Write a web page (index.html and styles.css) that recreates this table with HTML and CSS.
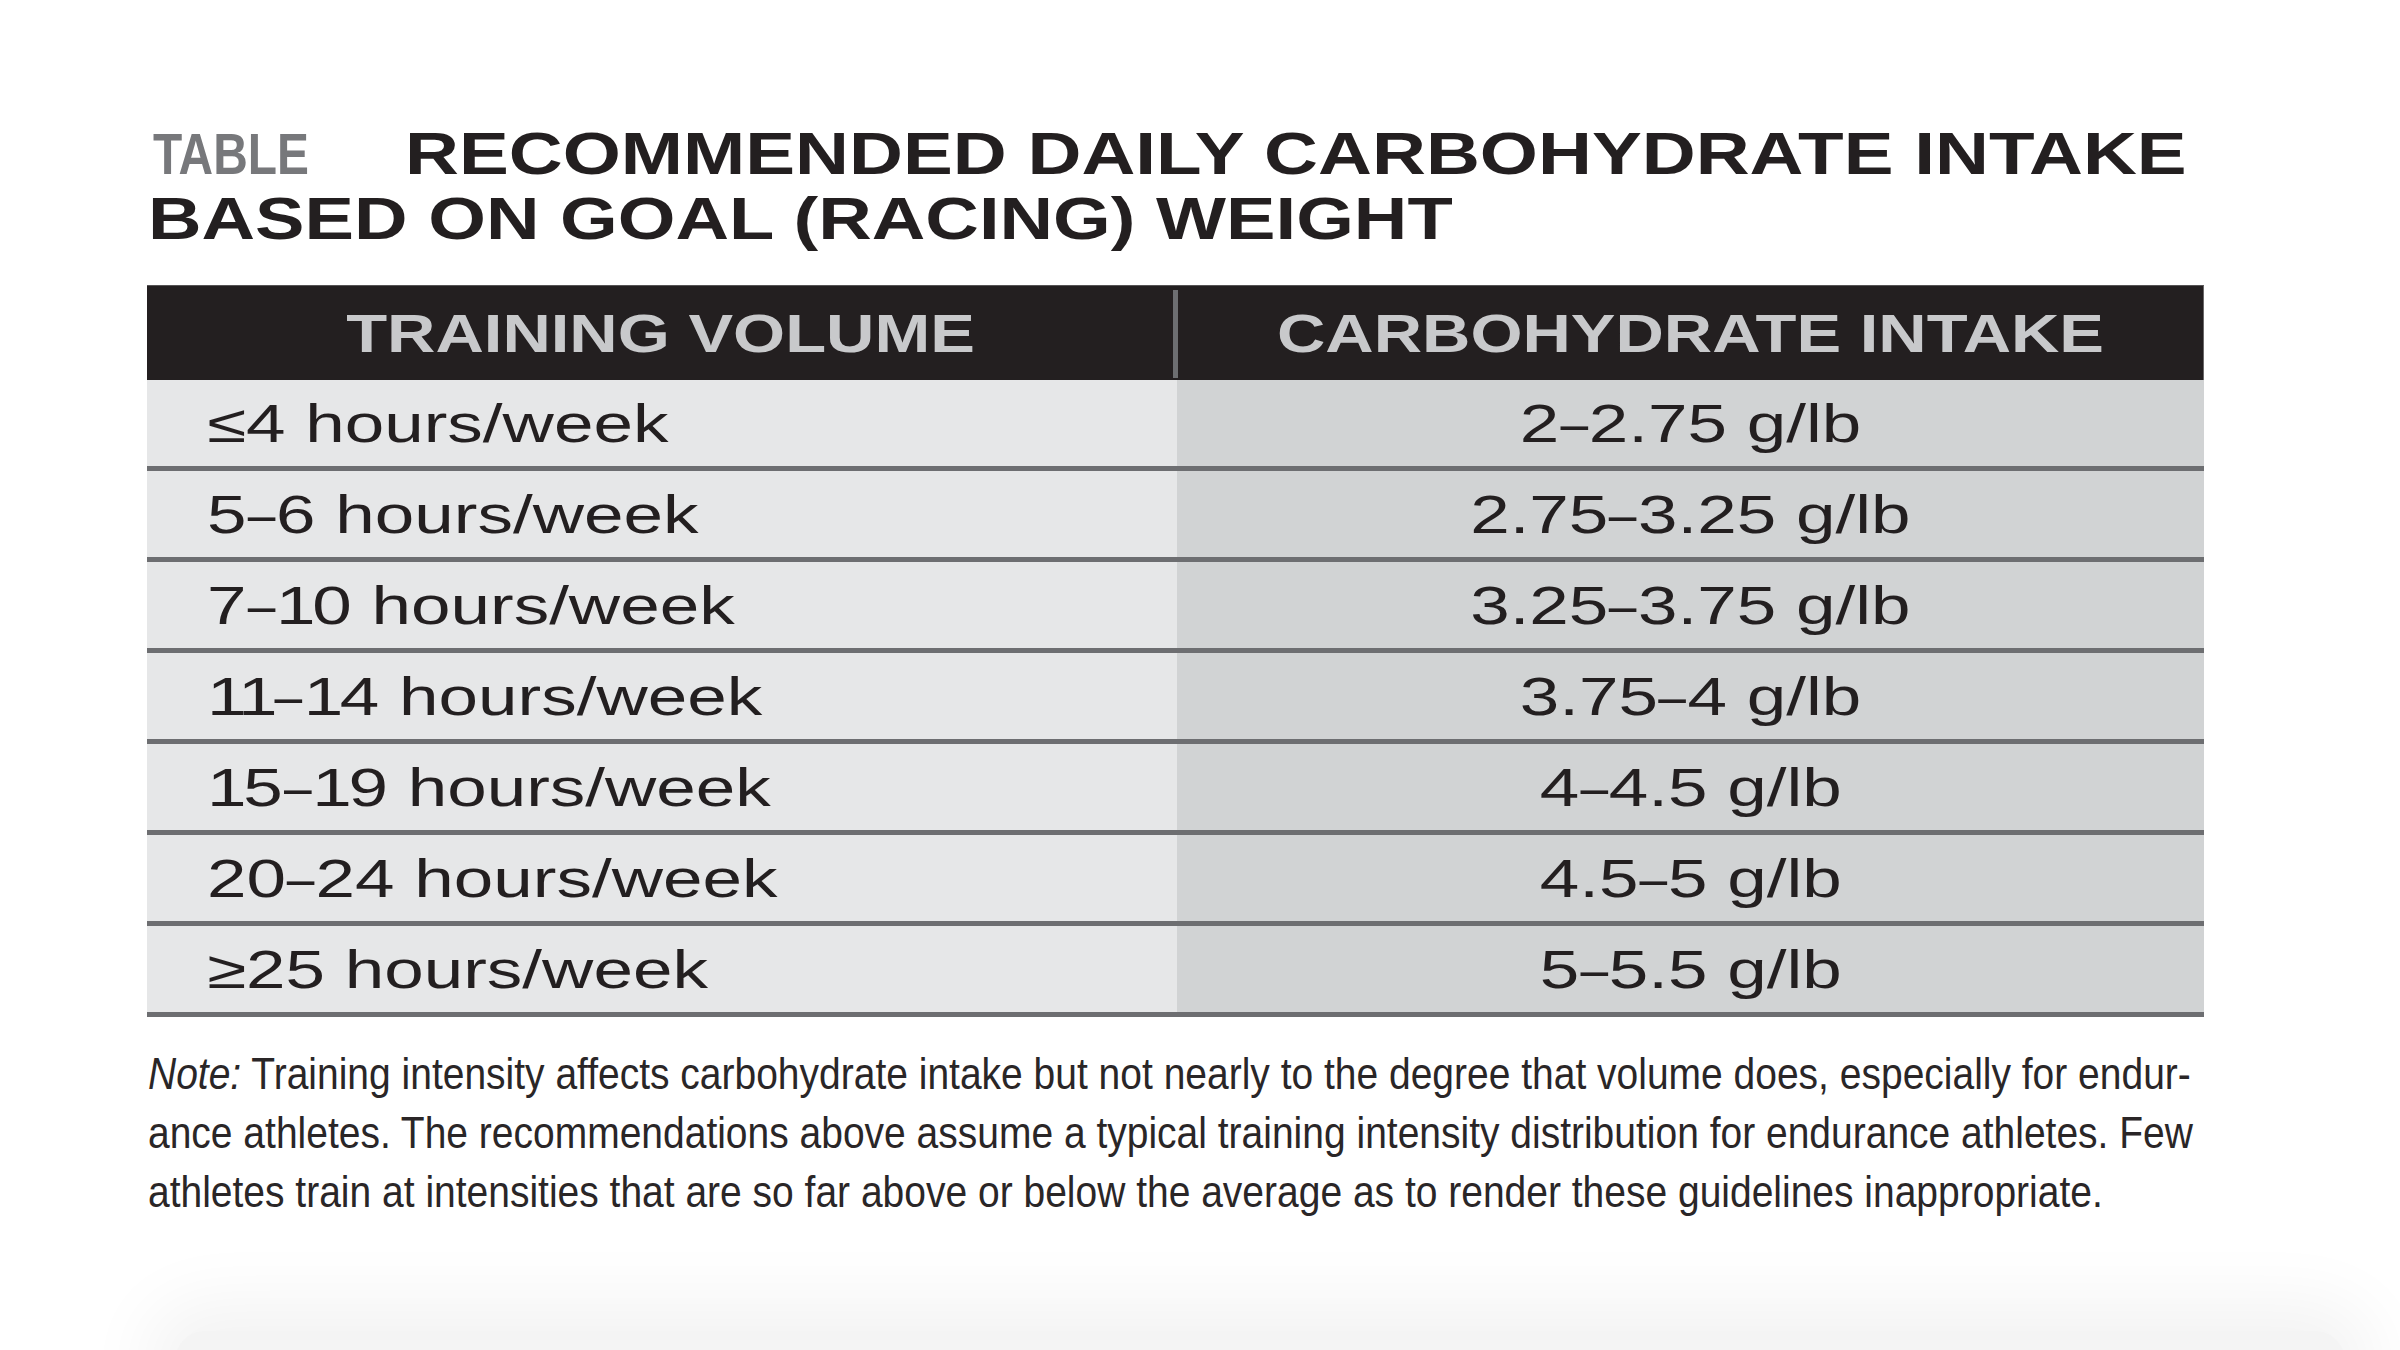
FILE: index.html
```html
<!DOCTYPE html>
<html lang="en">
<head>
<meta charset="utf-8">
<title>Recommended Daily Carbohydrate Intake</title>
<link rel="stylesheet" href="styles.css">
</head>
<body>
<main class="page">
  <h1 class="title">
    <span class="title-line first">
      <span class="tag"><span class="tag-text">TABLE</span></span>
      <span class="wide-bold">RECOMMENDED DAILY CARBOHYDRATE INTAKE</span>
    </span>
    <span class="title-line second">
      <span class="wide-bold narrower">BASED ON GOAL (RACING) WEIGHT</span>
    </span>
  </h1>

  <div class="table">
    <div class="thead">
      <div class="th"><span class="th-text">TRAINING VOLUME</span></div>
      <div class="divider"></div>
      <div class="th"><span class="th-text">CARBOHYDRATE INTAKE</span></div>
    </div>
    <div class="row"><div class="cell vol"><span class="td-left">≤4 hours/week</span></div><div class="cell carb"><span class="td-center">2<span class="d">–</span>2.75 g/lb</span></div></div>
    <div class="row"><div class="cell vol"><span class="td-left">5<span class="d">–</span>6 hours/week</span></div><div class="cell carb"><span class="td-center">2.75<span class="d">–</span>3.25 g/lb</span></div></div>
    <div class="row"><div class="cell vol"><span class="td-left">7<span class="d">–</span><span class="one">1</span>0 hours/week</span></div><div class="cell carb"><span class="td-center">3.25<span class="d">–</span>3.75 g/lb</span></div></div>
    <div class="row"><div class="cell vol"><span class="td-left"><span class="one">1</span><span class="one">1</span><span class="d">–</span><span class="one">1</span>4 hours/week</span></div><div class="cell carb"><span class="td-center">3.75<span class="d">–</span>4 g/lb</span></div></div>
    <div class="row"><div class="cell vol"><span class="td-left"><span class="one">1</span>5<span class="d">–</span><span class="one">1</span>9 hours/week</span></div><div class="cell carb"><span class="td-center">4<span class="d">–</span>4.5 g/lb</span></div></div>
    <div class="row"><div class="cell vol"><span class="td-left">20<span class="d">–</span>24 hours/week</span></div><div class="cell carb"><span class="td-center">4.5<span class="d">–</span>5 g/lb</span></div></div>
    <div class="row"><div class="cell vol"><span class="td-left">≥25 hours/week</span></div><div class="cell carb"><span class="td-center">5<span class="d">–</span>5.5 g/lb</span></div></div>
  </div>

  <p class="note">
    <span class="note-line"><em>Note:</em> Training intensity affects carbohydrate intake but not nearly to the degree that volume does, especially for endur-</span>
    <span class="note-line">ance athletes. The recommendations above assume a typical training intensity distribution for endurance athletes. Few</span>
    <span class="note-line">athletes train at intensities that are so far above or below the average as to render these guidelines inappropriate.</span>
  </p>
</main>
<div class="next-card"></div>
</body>
</html>
```

FILE: styles.css
```css
html, body {
  margin: 0;
  padding: 0;
  background: #ffffff;
}

body {
  width: 2400px;
  height: 1350px;
  overflow: hidden;
  font-family: "Liberation Sans", Arial, sans-serif;
  color: #231f20;
}

.page {
  padding: 122px 0 0 147px;
  width: 2057px;
}

/* ---------- title ---------- */
.title {
  margin: 0;
  font-weight: 700;
  font-size: 59px;
  line-height: 65px;
  color: #231f20;
}

.title-line {
  display: flex;
  align-items: baseline;
  white-space: nowrap;
  height: 65px;
}

.title-line.second {
  padding-left: 1px;
}

.tag {
  display: inline-block;
  width: 258px;
}

.tag-text {
  display: inline-block;
  font-size: 57px;
  color: #77787b;
  padding-left: 7px;
  transform: scaleX(0.84);
  transform-origin: left center;
}

.wide-bold {
  display: inline-block;
  transform: scaleX(1.266);
  transform-origin: left center;
}

.wide-bold.narrower {
  transform: scaleX(1.257);
}

/* ---------- table ---------- */
.table {
  margin-top: 33px;
  width: 2057px;
}

.thead {
  display: grid;
  grid-template-columns: 1026px 5px 1fr;
  height: 95px;
  background: #231f20;
  box-sizing: border-box;
  border-top: 1px solid #555354;
  border-right: 1px solid #6a6869;
}

.th {
  display: flex;
  align-items: center;
  justify-content: center;
  font-weight: 700;
  font-size: 54px;
  color: #c8c9cb;
  white-space: nowrap;
}

.th-text {
  display: inline-block;
  transform: scaleX(1.24);
  transform-origin: center center;
}

.divider {
  margin: 4px 0 2px;
  background: #6d6e71;
}

.row {
  display: grid;
  grid-template-columns: 1030px 1fr;
  height: 91px;
  box-sizing: border-box;
  border-bottom: 5px solid #6d6e71;
}

.cell {
  display: flex;
  align-items: center;
  font-size: 53px;
  white-space: nowrap;
  color: #231f20;
}

.vol {
  background: #e6e7e8;
  padding-left: 60px;
}

.carb {
  background: #d1d3d4;
  justify-content: center;
}

.td-left {
  display: inline-block;
  transform: scaleX(1.34);
  transform-origin: left center;
}

.td-center {
  display: inline-block;
  transform: scaleX(1.34);
  transform-origin: center center;
}

.d {
  display: inline-block;
  transform: scaleX(0.7);
  margin: 0 -0.07em;
}

.one {
  letter-spacing: -2.5px;
}

/* ---------- note ---------- */
.note {
  margin: 27px 0 0 1px;
  font-size: 44px;
  line-height: 59px;
  color: #2a2627;
}

.note-line {
  display: block;
  white-space: nowrap;
  transform: scaleX(0.886);
  transform-origin: left center;
}

.note em {
  font-style: italic;
}

/* ---------- faint card below ---------- */
.next-card {
  margin: 110px 0 0 175px;
  width: 2170px;
  height: 60px;
  background: #f4f4f4;
  box-shadow: 0 0 70px 30px rgba(0, 0, 0, 0.05);
  border-radius: 30px;
}
```
